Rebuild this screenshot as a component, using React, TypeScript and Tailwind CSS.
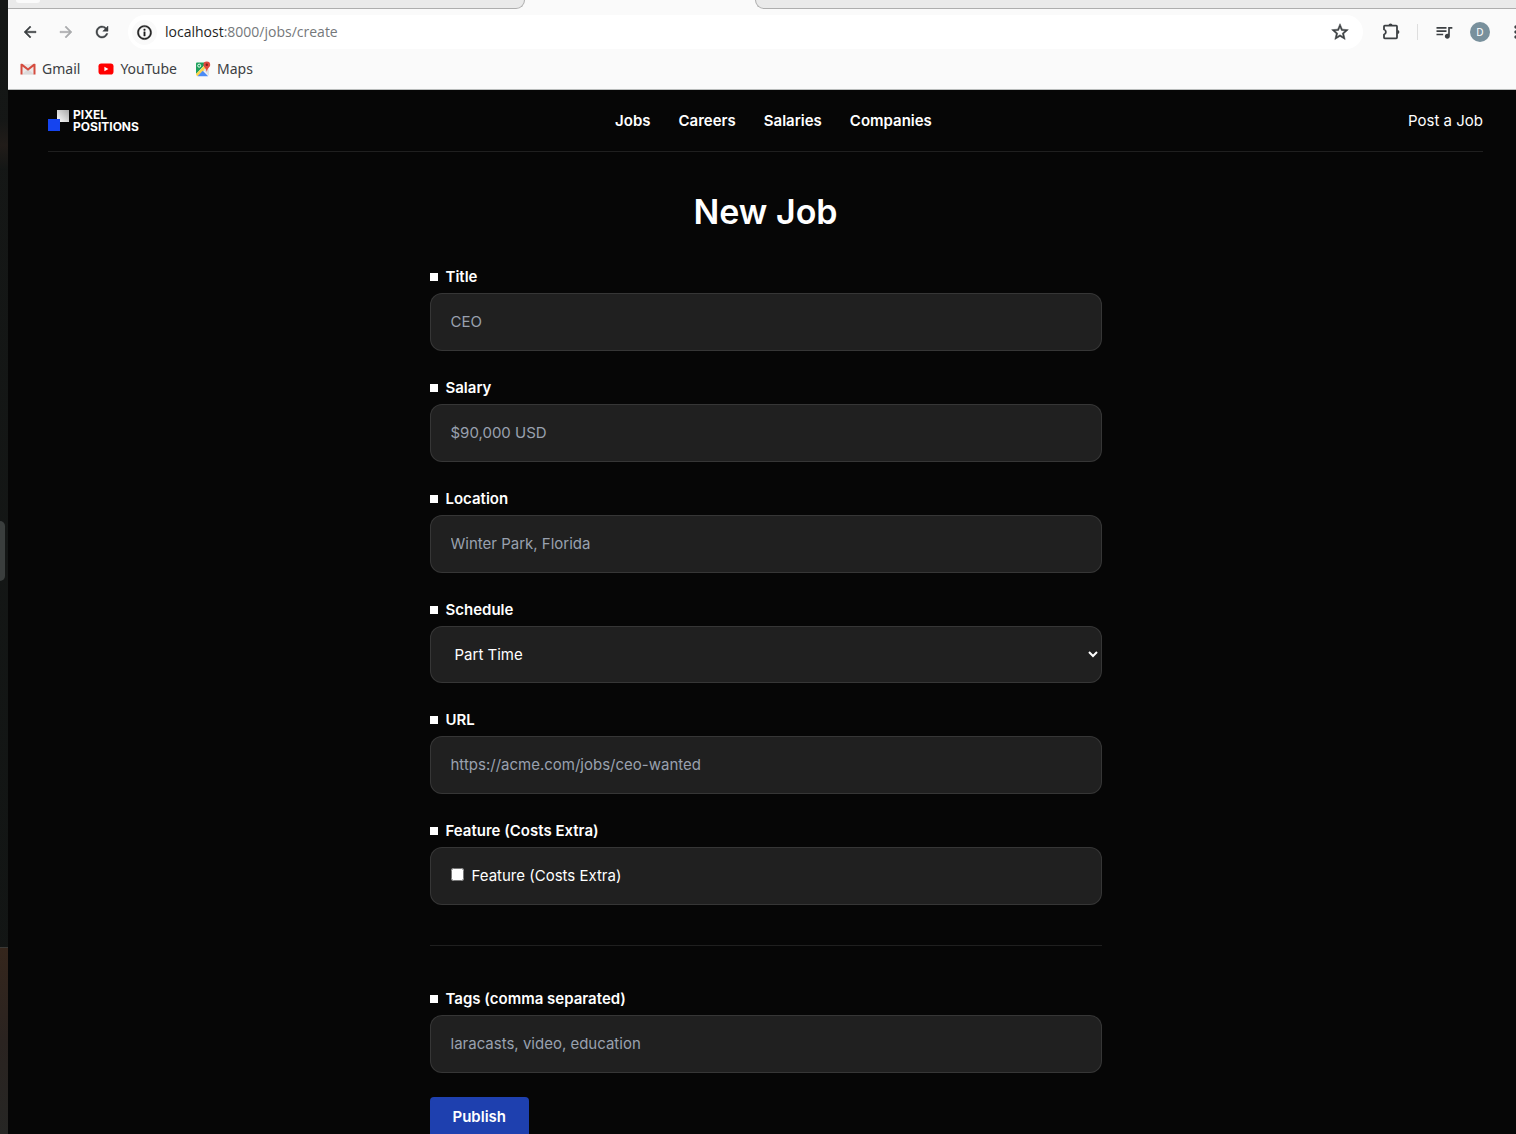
import type { ReactNode } from 'react';
import {
  MdArrowBack,
  MdArrowForward,
  MdInfoOutline,
  MdMoreVert,
  MdQueueMusic,
  MdRefresh,
  MdStarOutline,
} from 'react-icons/md';

const navLinks = ['Jobs', 'Careers', 'Salaries', 'Companies'];

const fieldBox =
  'block w-full rounded-xl border border-white/10 bg-[#202020] text-[15px] leading-6 text-white outline-none placeholder:text-gray-400';

function GmailIcon() {
  return (
    <svg width="16" height="16" viewBox="0 0 16 16" aria-hidden="true">
      <path d="M1.5 3h13v10.500h-13z" fill="#eceaea" />
      <path d="M2 13.500 8 8l6 5.500z" fill="#dcdada" />
      <path d="M.5 3.200V13.500h2V5.600L8 9.800l5.500-4.200v7.900h2V3.200c-.6-.8-1.600-.6-2.200-.1L8 7.300 2.700 3.100C2 2.600 1 2.500.5 3.200z" fill="#d54c3f" />
    </svg>
  );
}

function YouTubeIcon() {
  return (
    <svg width="16" height="16" viewBox="0 0 16 16" aria-hidden="true">
      <rect x="0.500" y="2.500" width="15" height="11" rx="2.800" fill="#f00" />
      <path d="M6.400 5.700v4.600L10.400 8z" fill="#fff" />
    </svg>
  );
}

function MapsIcon() {
  return (
    <svg width="16" height="16" viewBox="0 0 16 16" aria-hidden="true">
      <path d="M1 2.500Q1 1.500 2 1.500h10L1 13z" fill="#1fa15d" />
      <path d="M1 13 11.500 2.500l2.500 2L3 15.200Q1 15 1 13z" fill="#fdd549" />
      <path d="M2.500 15.200 7.800 9.800l5.400 5.400z" fill="#4b8bf5" />
      <path d="M8.500 9 11 6.500l3 2.500v5l-.6.600z" fill="#dfe2e5" />
      <circle cx="4.200" cy="4.700" r="1.500" fill="none" stroke="#fff" strokeWidth="0.900" />
      <path d="M11.800.4a3.400 3.400 0 0 1 3.400 3.400c0 2.600-2.800 3.200-3.200 6.600h-.4c-.4-3.400-3.200-4-3.200-6.600A3.400 3.400 0 0 1 11.800.4z" fill="#e0493e" />
      <circle cx="11.800" cy="3.800" r="1.200" fill="#7c231d" />
    </svg>
  );
}

function ExtensionIcon() {
  return (
    <svg width="20" height="20" viewBox="0 0 20 20" aria-hidden="true">
      <g fill="#3c4043">
        <path
          d="M3.800 3.600h11.400a.8.800 0 0 1 .8.800v11.200a.8.800 0 0 1-.8.800H3.800a.8.800 0 0 1-.8-.8v-3.100a2.600 2.600 0 0 0 0-5V4.400a.8.800 0 0 1 .8-.8z"
          fillOpacity="0"
          stroke="#3c4043"
          strokeWidth="1.800"
          strokeLinejoin="round"
        />
        <path d="M7.500 3.400a2 2 0 0 1 4 0zM16.400 8v4a2 2 0 0 0 0-4z" />
      </g>
    </svg>
  );
}

function Bookmark({ icon, children }: { icon: ReactNode; children: ReactNode }) {
  return (
    <a href="#" className="flex items-center gap-1.5 text-[14px] leading-5 text-[#3c4043]">
      {icon}
      {children}
    </a>
  );
}

function BrowserChrome() {
  return (
    <div className="shrink-0 border-b border-[#b9bcbb] bg-[#fafafa] font-['Noto_Sans',sans-serif]">
      <div className="flex h-[9px]">
        <div className="w-[517px] shrink-0 rounded-br-xl border-r border-b border-[#aeaeae] bg-[#eaeaea]">
          <div className="ml-2 h-[3px] w-6 rounded-b-full bg-[#fafafa]" />
        </div>
        <div className="w-[230px] shrink-0" />
        <div className="grow rounded-bl-xl border-b border-l border-[#aeaeae] bg-[#eaeaea]" />
      </div>

      <div className="flex h-[46px] items-center overflow-hidden pl-3 [&_path[fill=none]]:stroke-none">
        <button aria-label="Back" className="mr-4 p-px text-[#3c4043]">
          <MdArrowBack size={18} strokeWidth={0.6} />
        </button>
        <button aria-label="Forward" className="mr-4 p-px text-[#a9abad]">
          <MdArrowForward size={18} strokeWidth={0.6} />
        </button>
        <button aria-label="Reload" className="mr-4 p-px text-[#3c4043]">
          <MdRefresh size={18} strokeWidth={0.6} />
        </button>
        <div className="flex h-[34px] grow items-center rounded-full bg-white pr-[13px] pl-1">
          <button aria-label="Site information" className="mr-2 rounded-full bg-[#fafafa] p-1 text-[#1f1f1f]">
            <MdInfoOutline size={17} strokeWidth={0.6} />
          </button>
          <div className="grow font-['Open_Sans',sans-serif] text-[14px] leading-5 text-[#75787b]">
            <span className="text-[#1f1f1f]">localhost</span>:8000/jobs/create
          </div>
          <button aria-label="Bookmark this page" className="text-[#3c4043]">
            <MdStarOutline size={20} strokeWidth={0.6} />
          </button>
        </div>
        <button aria-label="Extensions" className="ml-[18px]">
          <ExtensionIcon />
        </button>
        <div className="ml-4 h-4 w-px bg-[#dedede]" />
        <button aria-label="Media controls" className="ml-4 text-[#3c4043]">
          <MdQueueMusic size={20} />
        </button>
        <button
          aria-label="Profile"
          className="ml-4 size-5 rounded-full bg-[#78909c] text-[10px] leading-5 text-white"
        >
          D
        </button>
        <button aria-label="More" className="-mr-2.5 ml-4 text-[#3c4043]">
          <MdMoreVert size={20} />
        </button>
      </div>

      <div className="flex h-[34px] items-start gap-[18px] pt-1 pl-3">
        <Bookmark icon={<GmailIcon />}>Gmail</Bookmark>
        <Bookmark icon={<YouTubeIcon />}>YouTube</Bookmark>
        <Bookmark icon={<MapsIcon />}>Maps</Bookmark>
      </div>
    </div>
  );
}

function Logo() {
  return (
    <a href="#" aria-label="Pixel Positions" className="flex items-center gap-1">
      <svg width="21" height="21" viewBox="0 0 21 21" aria-hidden="true">
        <defs>
          <linearGradient id="logo-square" x1="0" y1="1" x2="1" y2="0">
            <stop offset="0" stopColor="#fff" />
            <stop offset="1" stopColor="#a8a8a8" />
          </linearGradient>
        </defs>
        <rect x="9" y="0" width="12" height="12" fill="url(#logo-square)" />
        <rect x="0" y="9" width="12" height="12" fill="#1544ef" />
      </svg>
      <span className="flex flex-col text-[12px] leading-3 font-bold">
        <span>PIXEL</span>
        <span>POSITIONS</span>
      </span>
    </a>
  );
}

function Field({ id, label, children }: { id: string; label: string; children: ReactNode }) {
  return (
    <div>
      <div className="mb-1 flex h-[25px] items-center gap-2">
        <span className="size-2 bg-white" />
        <label htmlFor={id} className="text-[15px] leading-6 font-semibold">
          {label}
        </label>
      </div>
      {children}
    </div>
  );
}

function TextField({ id, label, placeholder }: { id: string; label: string; placeholder: string }) {
  return (
    <Field id={id} label={label}>
      <input id={id} name={id} type="text" placeholder={placeholder} className={`${fieldBox} px-5 py-4`} />
    </Field>
  );
}

export default function App() {
  return (
    <div className="flex h-screen overflow-hidden bg-[#060606] font-[Inter,sans-serif] text-[15px]">
      <div className="flex w-2 shrink-0 flex-col bg-linear-to-b from-[#151716] to-[#121514]">
        <div className="h-[120px]" />
        <div className="h-[50px] bg-linear-to-b from-[#151716] via-[#211c19] to-[#131615]" />
        <div className="h-[351px]" />
        <div className="h-[60px] w-[5px] rounded-r-lg bg-[#3a3e3d]" />
        <div className="h-[366px]" />
        <div className="grow border-t border-[#3a3936] bg-linear-to-b from-[#35261c] via-[#2a2320] to-[#262624]" />
      </div>

      <div className="flex min-w-0 grow flex-col">
        <BrowserChrome />

        <div className="grow overflow-y-auto pr-[33px] pb-10 pl-10 text-white [scrollbar-width:none]">
          <nav className="flex h-[62px] items-center justify-between border-b border-white/10">
            <Logo />
            <div className="flex gap-7 leading-6 font-semibold">
              {navLinks.map((link) => (
                <a key={link} href="#">
                  {link}
                </a>
              ))}
            </div>
            <a href="#" className="leading-6">
              Post a Job
            </a>
          </nav>

          <main className="mx-auto mt-10 max-w-2xl">
            <h1 className="mb-8 text-center text-[34px] leading-10 font-semibold">New Job</h1>

            <form className="space-y-6" onSubmit={(event) => event.preventDefault()}>
              <TextField id="title" label="Title" placeholder="CEO" />
              <TextField id="salary" label="Salary" placeholder="$90,000 USD" />
              <TextField id="location" label="Location" placeholder="Winter Park, Florida" />

              <Field id="schedule" label="Schedule">
                <select
                  id="schedule"
                  name="schedule"
                  defaultValue="Part Time"
                  className={`${fieldBox} h-[57px] px-5 py-4 pr-0`}
                >
                  <option>Part Time</option>
                  <option>Full Time</option>
                </select>
              </Field>

              <TextField id="url" label="URL" placeholder="https://acme.com/jobs/ceo-wanted" />

              <Field id="featured" label="Feature (Costs Extra)">
                <div className={`${fieldBox} px-5 py-4`}>
                  <label className="flex items-center gap-2">
                    <input id="featured" name="featured" type="checkbox" className="mb-[3px] size-[13px]" />
                    Feature (Costs Extra)
                  </label>
                </div>
              </Field>

              <hr className="my-10 border-white/10" />

              <TextField id="tags" label="Tags (comma separated)" placeholder="laracasts, video, education" />

              <button type="submit" className="h-10 rounded-sm bg-[#1e40af] px-[23px] leading-6 font-semibold">
                Publish
              </button>
            </form>
          </main>
        </div>
      </div>
    </div>
  );
}
